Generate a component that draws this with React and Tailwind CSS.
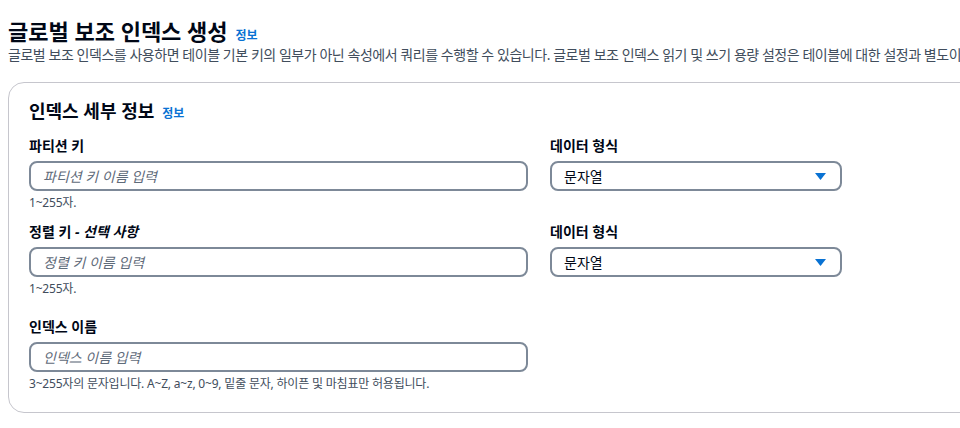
import React from "react";

const font = { fontFamily: '"Noto Sans", "Noto Sans CJK KR", sans-serif' };

const TextField = ({ label, optional, placeholder, hint }) => (
  <div className="w-[499px]">
    <label className="block text-[14px] leading-[18px] font-bold text-[#000716]">
      {label}
      {optional && <i className="font-bold"> - {optional}</i>}
    </label>
    <div className="mt-[6px] h-[30px] rounded-lg border-2 border-[#7d8998] px-[12px] flex items-center">
      <span className="text-[14px] italic text-[#5f6b7a]">{placeholder}</span>
    </div>
    <p className="mt-[4px] text-[12px] leading-[16px] tracking-[-0.2px] text-[#414d5c] whitespace-nowrap">{hint}</p>
  </div>
);

const SelectField = ({ label }) => (
  <div className="w-[292px]">
    <label className="block text-[14px] leading-[18px] font-bold text-[#000716]">{label}</label>
    <div className="mt-[6px] h-[30px] rounded-lg border-2 border-[#7d8998] pl-[12px] pr-[14px] flex items-center justify-between">
      <span className="text-[14px] text-[#000716]">문자열</span>
      <svg width="11" height="7" viewBox="0 0 11 7">
        <path d="M0 0 H11 L5.5 7 Z" fill="#0972d3" />
      </svg>
    </div>
  </div>
);

export default function App() {
  return (
    <div className="w-[960px] h-[428px] overflow-hidden bg-white" style={font}>
      <div className="pl-2 pt-[16px]">
        {/* 페이지 헤더 */}
        <div className="flex items-baseline gap-[8px]">
          <h1 className="text-[22px] leading-[30px] font-bold text-[#000716] whitespace-nowrap">
            글로벌 보조 인덱스 생성
          </h1>
          <a className="text-[12px] font-bold text-[#0972d3]">정보</a>
        </div>
        <div className="w-[952px] overflow-hidden">
          <p className="mt-[-1px] text-[14px] leading-[20px] tracking-[-0.45px] text-[#414d5c] whitespace-nowrap">
            글로벌 보조 인덱스를 사용하면 테이블 기본 키의 일부가 아닌 속성에서 쿼리를 수행할 수 있습니다. 글로벌 보조 인덱스 읽기 및 쓰기 용량 설정은 테이블에 대한 설정과 별도이므로 유의하세요.
          </p>
        </div>

        {/* 인덱스 세부 정보 카드 */}
        <div className="mt-[17px] w-[1000px] rounded-2xl border border-[#c6c6cd] pl-[20px] pt-[17px] pb-[20px]">
          <div className="flex items-baseline gap-[8px]">
            <h2 className="text-[18px] leading-[22px] font-bold text-[#000716]">인덱스 세부 정보</h2>
            <a className="text-[12px] font-bold text-[#0972d3]">정보</a>
          </div>

          <div className="mt-[14px] flex items-start gap-[22px]">
            <TextField label="파티션 키" placeholder="파티션 키 이름 입력" hint="1~255자." />
            <SelectField label="데이터 형식" />
          </div>

          <div className="mt-[12px] flex items-start gap-[22px]">
            <TextField label="정렬 키" optional="선택 사항" placeholder="정렬 키 이름 입력" hint="1~255자." />
            <SelectField label="데이터 형식" />
          </div>

          <div className="mt-[21px]">
            <TextField
              label="인덱스 이름"
              placeholder="인덱스 이름 입력"
              hint="3~255자의 문자입니다. A~Z, a~z, 0~9, 밑줄 문자, 하이픈 및 마침표만 허용됩니다."
            />
          </div>
        </div>
      </div>
    </div>
  );
}
